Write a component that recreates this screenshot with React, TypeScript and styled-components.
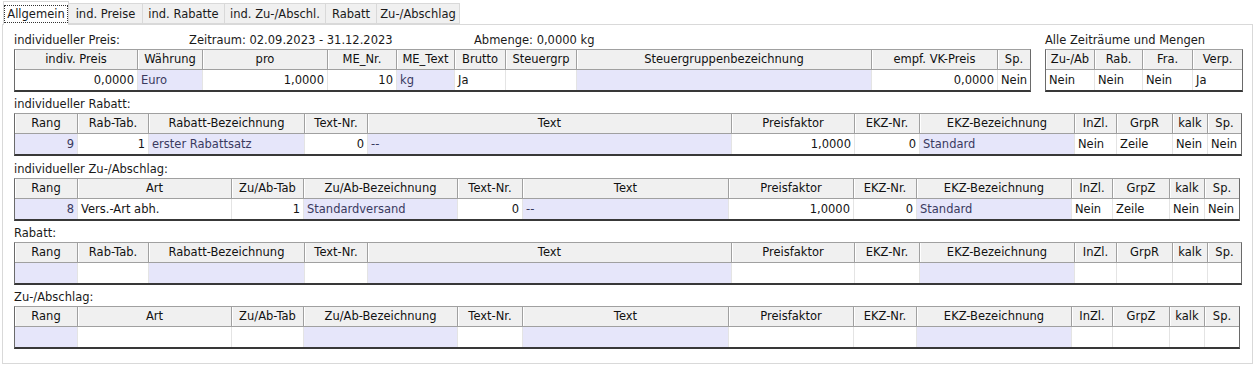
import React from "react";
import styled, { createGlobalStyle } from "styled-components";

type Col = { h: string; w: number; v?: string; right?: boolean; lav?: boolean };

const GlobalStyle = createGlobalStyle`
  html, body {
    margin: 0;
    padding: 0;
    background: #ffffff;
  }
  body {
    font-family: "DejaVu Sans", Verdana, sans-serif;
    font-size: 11.5px;
    color: #1a1a1a;
  }
`;

const Window = styled.div`
  width: 1256px;
  height: 366px;
  box-sizing: border-box;
  padding: 1px 3px 0 2px;
`;

const TabBar = styled.div`
  display: flex;
  align-items: flex-end;
  height: 23px;
  padding-left: 1px;
`;

const Tab = styled.div<{ $active?: boolean; $w: number }>`
  width: ${(p) => p.$w}px;
  height: ${(p) => (p.$active ? 24 : 21)}px;
  margin-bottom: ${(p) => (p.$active ? -1 : 0)}px;
  margin-right: -1px;
  box-sizing: border-box;
  display: flex;
  align-items: center;
  justify-content: center;
  background: ${(p) => (p.$active ? "#ffffff" : "#f0f0f0")};
  border: 1px solid #d9d9d9;
  border-bottom: ${(p) => (p.$active ? "none" : "1px solid #d9d9d9")};
  position: relative;
  z-index: ${(p) => (p.$active ? 1 : 0)};
  white-space: nowrap;
`;

const FocusLabel = styled.span`
  outline: 1px dotted #333;
  padding: 1px 2px;
`;

const Panel = styled.div`
  height: 340px;
  box-sizing: border-box;
  border: 1px solid #d9d9d9;
  background: #ffffff;
  padding: 3px 0 0 11px;
`;

const TopSection = styled.div`
  display: flex;
  gap: 14px;
`;

const Block = styled.div`
  display: flex;
  flex-direction: column;
`;

const LabelRow = styled.div<{ $cols?: string; $h?: number }>`
  height: ${(p) => p.$h || 21}px;
  box-sizing: border-box;
  padding: ${(p) => (p.$h || 21) - 16}px 0 0 0;
  line-height: 14px;
  display: grid;
  grid-template-columns: ${(p) => p.$cols || "auto"};
  white-space: nowrap;
`;

const Grid = styled.div<{ $cols: string }>`
  display: grid;
  grid-template-columns: ${(p) => p.$cols};
  width: fit-content;
  border-top: 1px solid #a0a0a0;
  border-left: 1px solid #6a6a6a;
  border-right: 1px solid #6a6a6a;
  border-bottom: 2px solid #383838;
`;

const HeadCell = styled.div<{ $last?: boolean }>`
  height: 20px;
  box-sizing: border-box;
  background: #f0f0f0;
  border-bottom: 1px solid #a0a0a0;
  border-right: ${(p) => (p.$last ? "none" : "1px solid #a0a0a0")};
  box-shadow: inset 1px 0 0 #ffffff;
  line-height: 19px;
  text-align: center;
  white-space: nowrap;
  overflow: hidden;
  color: #111;
`;

const DataCell = styled.div<{ $right?: boolean; $lav?: boolean; $last?: boolean }>`
  height: 20px;
  box-sizing: border-box;
  padding: 0 3px;
  line-height: 20px;
  text-align: ${(p) => (p.$right ? "right" : "left")};
  background: ${(p) => (p.$lav ? "#e6e6fa" : "#ffffff")};
  color: ${(p) => (p.$lav ? "#3a3a60" : "#141414")};
  border-right: ${(p) => (p.$last ? "none" : "1px solid #e4e4e4")};
  white-space: nowrap;
  overflow: hidden;
`;

const DataTable = ({ cols, empty }: { cols: Col[]; empty?: boolean }) => {
  const template = cols
    .map((c, i) => {
      let w = c.w;
      if (i === 0) w -= 1;
      if (i === cols.length - 1) w -= 1;
      return `${w}px`;
    })
    .join(" ");
  return (
    <Grid $cols={template}>
      {cols.map((c, i) => (
        <HeadCell key={"h" + i} $last={i === cols.length - 1}>
          {c.h}
        </HeadCell>
      ))}
      {cols.map((c, i) => (
        <DataCell key={"d" + i} $right={c.right} $lav={c.lav} $last={i === cols.length - 1}>
          {empty ? "" : c.v}
        </DataCell>
      ))}
    </Grid>
  );
};

const preisCols: Col[] = [
  { h: "indiv. Preis", w: 124, v: "0,0000", right: true },
  { h: "Währung", w: 65, v: "Euro", lav: true },
  { h: "pro", w: 125, v: "1,0000", right: true },
  { h: "ME_Nr.", w: 69, v: "10", right: true },
  { h: "ME_Text", w: 58, v: "kg", lav: true },
  { h: "Brutto", w: 51, v: "Ja" },
  { h: "Steuergrp", w: 71, v: "" },
  { h: "Steuergruppenbezeichnung", w: 295, v: "", lav: true },
  { h: "empf. VK-Preis", w: 126, v: "0,0000", right: true },
  { h: "Sp.", w: 33, v: "Nein" },
];

const alleCols: Col[] = [
  { h: "Zu-/Ab", w: 50, v: "Nein" },
  { h: "Rab.", w: 48, v: "Nein" },
  { h: "Fra.", w: 50, v: "Nein" },
  { h: "Verp.", w: 50, v: "Ja" },
];

const rabattCols: Col[] = [
  { h: "Rang", w: 64, v: "9", right: true, lav: true },
  { h: "Rab-Tab.", w: 71, v: "1", right: true },
  { h: "Rabatt-Bezeichnung", w: 156, v: "erster Rabattsatz", lav: true },
  { h: "Text-Nr.", w: 63, v: "0", right: true },
  { h: "Text", w: 364, v: "--", lav: true },
  { h: "Preisfaktor", w: 123, v: "1,0000", right: true },
  { h: "EKZ-Nr.", w: 65, v: "0", right: true },
  { h: "EKZ-Bezeichnung", w: 155, v: "Standard", lav: true },
  { h: "InZl.", w: 42, v: "Nein" },
  { h: "GrpR", w: 56, v: "Zeile" },
  { h: "kalk", w: 35, v: "Nein" },
  { h: "Sp.", w: 34, v: "Nein" },
];

const zuabCols: Col[] = [
  { h: "Rang", w: 64, v: "8", right: true, lav: true },
  { h: "Art", w: 154, v: "Vers.-Art abh." },
  { h: "Zu/Ab-Tab", w: 72, v: "1", right: true },
  { h: "Zu/Ab-Bezeichnung", w: 154, v: "Standardversand", lav: true },
  { h: "Text-Nr.", w: 65, v: "0", right: true },
  { h: "Text", w: 206, v: "--", lav: true },
  { h: "Preisfaktor", w: 125, v: "1,0000", right: true },
  { h: "EKZ-Nr.", w: 63, v: "0", right: true },
  { h: "EKZ-Bezeichnung", w: 155, v: "Standard", lav: true },
  { h: "InZl.", w: 41, v: "Nein" },
  { h: "GrpZ", w: 57, v: "Zeile" },
  { h: "kalk", w: 35, v: "Nein" },
  { h: "Sp.", w: 35, v: "Nein" },
];

const tabs = [
  { t: "Allgemein", w: 66 },
  { t: "ind. Preise", w: 75 },
  { t: "ind. Rabatte", w: 83 },
  { t: "ind. Zu-/Abschl.", w: 102 },
  { t: "Rabatt", w: 52 },
  { t: "Zu-/Abschlag", w: 84 },
];

export default function App() {
  return (
    <Window>
      <GlobalStyle />
      <TabBar>
        {tabs.map((t, i) => (
          <Tab key={t.t} $w={t.w} $active={i === 0}>
            {i === 0 ? <FocusLabel>{t.t}</FocusLabel> : t.t}
          </Tab>
        ))}
      </TabBar>
      <Panel>
        <TopSection>
          <Block>
            <LabelRow $cols="175px 285px auto">
              <span>individueller Preis:</span>
              <span>Zeitraum: 02.09.2023 - 31.12.2023</span>
              <span>Abmenge: 0,0000 kg</span>
            </LabelRow>
            <DataTable cols={preisCols} />
          </Block>
          <Block>
            <LabelRow>Alle Zeiträume und Mengen</LabelRow>
            <DataTable cols={alleCols} />
          </Block>
        </TopSection>
        <LabelRow>individueller Rabatt:</LabelRow>
        <DataTable cols={rabattCols} />
        <LabelRow $h={22}>individueller Zu-/Abschlag:</LabelRow>
        <DataTable cols={zuabCols} />
        <LabelRow>Rabatt:</LabelRow>
        <DataTable cols={rabattCols} empty />
        <LabelRow>Zu-/Abschlag:</LabelRow>
        <DataTable cols={zuabCols} empty />
      </Panel>
    </Window>
  );
}
